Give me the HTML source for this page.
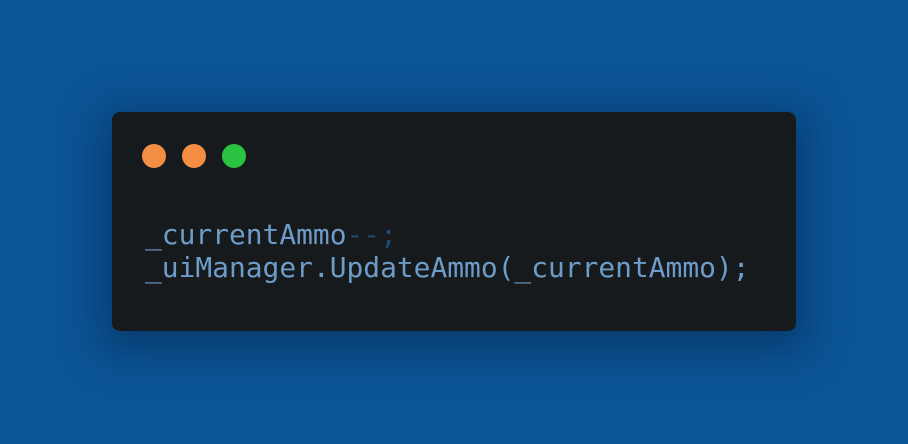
<!DOCTYPE html>
<html><head><style>
html,body{margin:0;padding:0;}
body{width:908px;height:444px;background:#0b5495;position:relative;overflow:hidden;}
.card{position:absolute;left:112px;top:112px;width:684px;height:219px;background:#161a1d;border-radius:8px;box-shadow:0 10px 40px 10px rgba(5,40,80,0.55);}
.dot{position:absolute;top:144px;width:24px;height:24px;border-radius:50%;}
.code{position:absolute;left:145px;top:218px;font-family:"DejaVu Sans Mono","Liberation Mono",monospace;font-size:27.9px;line-height:33px;color:#6d9cc8;white-space:pre;}
.d{color:#1f4a72}
</style></head><body>
<div class="card"></div>
<div class="dot" style="left:142px;background:#f48e45"></div>
<div class="dot" style="left:182px;background:#f48e45"></div>
<div class="dot" style="left:222px;background:#2bc442"></div>
<div class="code">_currentAmmo<span class="d">--;</span>
_uiManager.UpdateAmmo(_currentAmmo);</div>
</body></html>
